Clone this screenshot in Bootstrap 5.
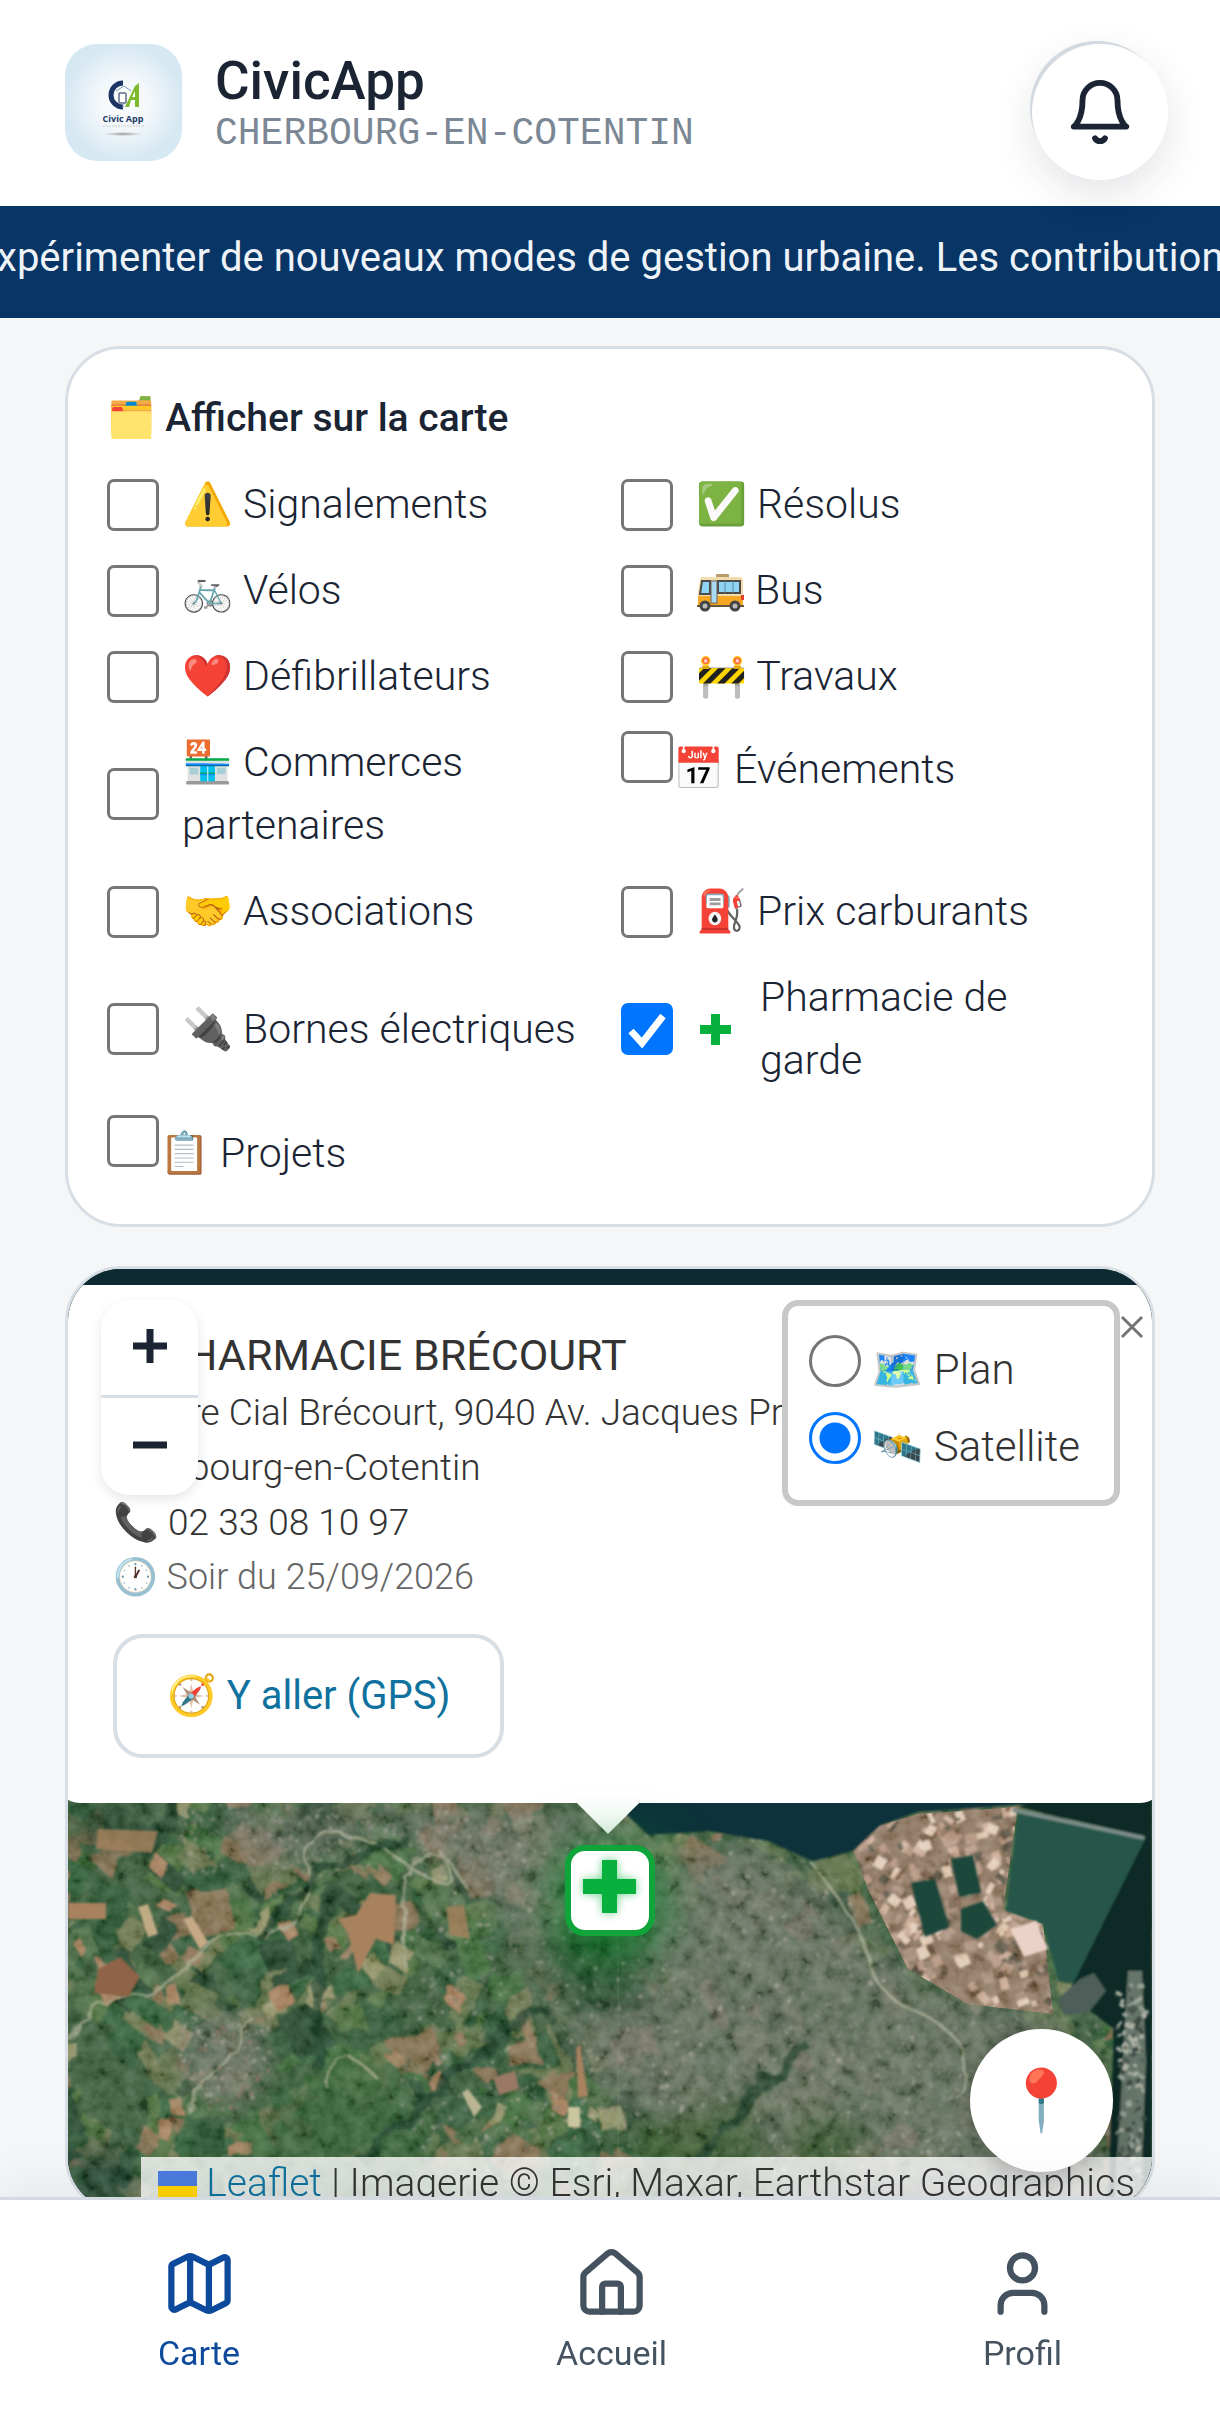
<!DOCTYPE html>
<html lang="fr">
<head>
<meta charset="utf-8">
<meta name="viewport" content="width=device-width, initial-scale=1">
<title>CivicApp – Carte</title>
<link href="https://cdn.jsdelivr.net/npm/bootstrap@5.3.0/dist/css/bootstrap.min.css" rel="stylesheet">
<style>
:root{--ink:#1a2433;--edge:#d8dee5;--green:#08b03d}
body{font-family:Roboto,"Noto Color Emoji",sans-serif;font-weight:300;font-size:41px;line-height:63px;color:var(--ink);background:#f4f6f8}
.topbar{padding:44px 52px 26px 65px;height:206px}
.brand{gap:33px}
.brand-logo{width:117px;height:117px;border-radius:32px}
.brand-title{font-size:53px;line-height:58px;font-weight:500;margin:8px 0 0}
.brand-sub{font-family:"Liberation Mono",monospace;font-weight:400;font-size:38px;line-height:48px;color:#7b8794}
.bell-btn{width:136px;height:136px;border:0;background:#fff;box-shadow:-3px -4px 0 -1px #d3d9e1,0 14px 40px rgba(26,36,51,.12)}
.ticker{height:112px;background:#063566;color:#eef3f8;font-weight:400;font-size:40px;line-height:104px;white-space:nowrap}
.page-body{padding:28px 65px 0}
.panel{background:#fff;border:3px solid var(--edge);border-radius:56px}
.filters{padding:38px 39px 39px;margin-bottom:39px}
.filters h2{font-size:39px;line-height:63px;font-weight:500;margin:0 0 23px}
.filter-grid{display:grid;grid-template-columns:1fr 1fr;gap:23px 22px}
.filter-grid label{display:flex;align-items:center;gap:23px}
.filter-grid label.plain{display:block}
.tick{appearance:none;flex:none;width:52px;height:52px;margin:0;border:3px solid #767676;border-radius:7px;background:#fff}
.tick.dot{border-radius:50%}
.plain .tick{vertical-align:baseline}
.layers .tick{vertical-align:-3px}
.tick:checked{border-color:#0075ff;background:#0075ff url("data:image/svg+xml,%3Csvg xmlns='http://www.w3.org/2000/svg' viewBox='0 0 46 46'%3E%3Cpath d='M7 25l11 12L39 10' fill='none' stroke='white' stroke-width='7'/%3E%3C/svg%3E") center/100%}
.tick.dot:checked{background:radial-gradient(circle,#0075ff 15px,#fff 16px)}
.plus-ico{width:31px;height:31px;margin:0 6px 0 4px;flex:none}
.bus-ico{width:49px;height:40px;vertical-align:-8px}
.map{height:947px;background:#102830}
.map-art{inset:0;width:100%;height:100%}
.popup{top:16px;left:-12px;right:-12px;height:518px;background:#fff;border-radius:24px;padding:40px 57px;color:#333;font-size:37px;line-height:55px}
.popup::after{content:"";position:absolute;left:50%;bottom:-22px;width:44px;height:44px;margin-left:-24px;background:#fff;transform:rotate(45deg)}
.popup h3{font-size:43px;line-height:60px;font-weight:400;margin:0}
.popup .when{color:#666;font-size:36px}
.gps{display:inline-block;margin-top:29px;padding:29px 50px;border:4px solid var(--edge);border-radius:30px;font-size:40px;line-height:58px;font-weight:400;color:#0f719e;text-decoration:none}
.zoomer{top:31px;left:33px;width:97px;border-radius:28px;background:#fff;box-shadow:0 4px 12px rgba(0,0,0,.1)}
.zoomer button{height:95px;border:0;background:none}
.zoomer button+button{height:100px;border-top:3px solid var(--edge)}
.zoomer svg{display:block;margin:-4px auto 0}
.layers{top:31px;right:32px;border:6px solid #c8c8c8;border-radius:16px;background:#fff;color:#333;font-size:42px;line-height:77px;padding:25px 34px 15px 21px}
.close-x{top:46px;right:8px;width:24px;height:24px;border:0;background:none;padding:0}
.pin-box{left:50%;top:576px;width:90px;height:91px;margin-left:-45px;border:6px solid #10a53b;border-radius:20px;background:#fff;box-shadow:0 8px 50px 8px rgba(0,140,40,.65)}
.locate{right:39px;top:760px;width:143px;height:143px;border:0;background:#fff;font-size:60px;box-shadow:0 6px 24px rgba(0,0,0,.25)}
.credit{right:0;bottom:0;padding:0 17px;background:rgba(255,255,255,.8);color:#333;font-size:39px;line-height:53px;white-space:nowrap}
.credit a{color:#0f719e;text-decoration:none}
.credit svg{width:39px;height:30px}
.tabs{height:221px;background:#fff;border-top:3px solid #d5dae2;box-shadow:0 -10px 50px rgba(26,36,51,.07);padding-top:46px}
.tabs a{color:#45525f;font-weight:400;font-size:34px;line-height:40px;text-decoration:none}
.tabs a.active{color:#0d4a9c}
.tabs svg{width:75px;height:75px;margin-bottom:12px}
</style>
</head>
<body>
<header class="topbar bg-white d-flex justify-content-between align-items-start">
  <div class="brand d-flex">
    <svg class="brand-logo" viewBox="0 0 117 117" role="img" aria-label="Civic App">
      <defs><radialGradient id="lg"><stop offset="0" stop-color="#fdfefe"/><stop offset=".5" stop-color="#f1f6fa"/><stop offset="1" stop-color="#d6e8f2"/></radialGradient>
      <radialGradient id="sh"><stop offset="0" stop-color="#999"/><stop offset="1" stop-color="#999" stop-opacity="0"/></radialGradient></defs>
      <rect width="117" height="117" fill="url(#lg)"/>
      <path d="M58 39a12 12 0 1 0 0 24" fill="none" stroke="#1d3564" stroke-width="5"/>
      <path d="M60 63L70 42l4-3v24h-4v-7h-4l-2 7z" fill="#7cb92c"/><path d="M70 47v6h-3z" fill="#fff"/>
      <rect x="54" y="49" width="7" height="10" rx="1" fill="#fff" stroke="#5d6c86" stroke-width="1.5"/><path d="M51 47l8-5 7 5M58 59v5" stroke="#7d9ab0" fill="none"/>
      <text x="58" y="78" text-anchor="middle" font-family="Open Sans,sans-serif" font-weight="700" font-size="9" fill="#253c63">Civic App</text>
      <path d="M38 82h42" stroke="#c6ccd2" stroke-dasharray="2 1"/><ellipse cx="58" cy="90" rx="19" ry="2" fill="url(#sh)"/>
    </svg>
    <div>
      <h1 class="brand-title">CivicApp</h1>
      <div class="brand-sub">CHERBOURG-EN-COTENTIN</div>
    </div>
  </div>
  <button class="bell-btn rounded-circle d-flex align-items-center justify-content-center p-0" aria-label="Notifications">
    <svg width="70" height="70" viewBox="0 0 24 24" fill="none" stroke="#1a2433" stroke-width="2" stroke-linecap="round" stroke-linejoin="round"><path d="M6 8a6 6 0 0 1 12 0c0 7 3 9 3 9H3s3-2 3-9"/><path d="M10.300 21a1.940 1.940 0 0 0 3.400 0"/></svg>
  </button>
</header>
<div class="ticker d-flex justify-content-center overflow-hidden"><span>expérimenter de nouveaux modes de gestion urbaine. Les contributions</span></div>

<main class="page-body">
  <section class="panel filters">
    <h2>🗂️ Afficher sur la carte</h2>
    <div class="filter-grid">
      <label><input class="tick" type="checkbox"><span>⚠️ Signalements</span></label>
      <label><input class="tick" type="checkbox"><span>✅ Résolus</span></label>
      <label><input class="tick" type="checkbox"><span>🚲 Vélos</span></label>
      <label><input class="tick" type="checkbox"><span><svg class="bus-ico" viewBox="0 0 49 40" aria-hidden="true"><rect x="20" y="2" width="13" height="4" rx="1" fill="#b99a6b"/><path d="M6 5h38q3 0 3 4v24H2V20L4 8q0-3 2-3z" fill="#f3dcae"/><path d="M2 24h45v10H2z" fill="#f5a623"/><path d="M4 22L6 9h8v13zM22 9h22v12H22z" fill="#8fd3f5" stroke="#4b4a48" stroke-width="2"/><path d="M29 9v12M37 9v12" stroke="#5d8aa0"/><rect x="15" y="9" width="6" height="22" fill="#a9dcf3" stroke="#6c6254"/><rect x="45" y="23" width="3" height="5" fill="#e0402f"/><path d="M1 33h47v2H1z" fill="#6a5540"/><g fill="#bbb" stroke="#444" stroke-width="3"><circle cx="9" cy="34" r="4"/><circle cx="39" cy="34" r="4"/></g></svg> Bus</span></label>
      <label><input class="tick" type="checkbox"><span>❤️ Défibrillateurs</span></label>
      <label><input class="tick" type="checkbox"><span>🚧 Travaux</span></label>
      <label><input class="tick" type="checkbox"><span>🏪 Commerces partenaires</span></label>
      <label class="plain"><input class="tick" type="checkbox">📅 Événements</label>
      <label><input class="tick" type="checkbox"><span>🤝 Associations</span></label>
      <label><input class="tick" type="checkbox"><span>⛽ Prix carburants</span></label>
      <label><input class="tick" type="checkbox"><span>🔌 Bornes électriques</span></label>
      <label><input class="tick" type="checkbox" checked><svg class="plus-ico" viewBox="0 0 31 31"><path d="M11 0h9v11h11v9H20v11h-9V20H0v-9h11z" fill="#08b03d"/></svg><span>Pharmacie de garde</span></label>
      <label class="plain"><input class="tick" type="checkbox">📋 Projets</label>
    </div>
  </section>

  <section class="panel map position-relative overflow-hidden">
    <svg class="map-art position-absolute" viewBox="0 0 1084 941" preserveAspectRatio="xMidYMin slice" aria-hidden="true">
      <defs>
        <filter id="grain" x="0" y="0" width="100%" height="100%"><feTurbulence type="fractalNoise" baseFrequency=".07" numOctaves="3" seed="7"/><feColorMatrix values="1.6 0 0 0 -.35  1.500 0 0 0 -.3  1.500 0 0 0 -.33  0 0 0 0 1"/></filter>
        <filter id="warp"><feTurbulence type="fractalNoise" baseFrequency=".03" numOctaves="3" seed="3"/><feDisplacementMap in="SourceGraphic" scale="18"/><feGaussianBlur stdDeviation="1"/></filter>
        <filter id="soft"><feGaussianBlur stdDeviation="1"/></filter>
        <filter id="blurry"><feGaussianBlur stdDeviation="14"/></filter>
        <clipPath id="port"><path d="M812 556L850 545 950 538 935 640 975 655 985 745 900 735 840 700 800 620 785 580z"/></clipPath>
      </defs>
      <rect width="1084" height="941" fill="#3c5c3d"/>
      <g id="fields" filter="url(#warp)"></g>
      <g filter="url(#blurry)" fill="#6b6f63" opacity=".8"><path d="M140 540H560L600 590 700 575 860 720 1000 750 1040 941H700L540 820 480 740 430 640 330 560 200 600z"/><ellipse cx="155" cy="790" rx="45" ry="50"/></g>
      <g filter="url(#blurry)" opacity=".85"><path d="M470 670L560 620 580 730 500 750z" fill="#234a2c"/><path d="M560 860l120-30 40 110H560z" fill="#35552e"/><path d="M200 820l140-20 40 141H180z" fill="#355f38"/><path d="M725 850h70v60h-70z" fill="#35552e"/><path d="M0 880h70v60H0z" fill="#243f30"/><path d="M225 534h60v20h-60zM0 534h70v40H0z" fill="#22402c"/></g>
      <g id="houses" filter="url(#soft)" opacity=".6"></g>
      <g fill="none" stroke="#a3a68c" stroke-width="3" opacity=".75" filter="url(#warp)"><path d="M0 770Q20 730 60 725T120 690 190 665 240 600 330 590 370 580"/><path d="M340 700Q325 610 350 590T400 620"/><path d="M740 590Q790 650 800 690T860 750 890 830"/><path d="M120 840Q160 790 185 750M260 820Q260 760 310 810"/></g>
      <g fill="none" stroke="#1e3c29" stroke-width="10" opacity=".75" filter="url(#warp)"><path d="M190 670L250 600 340 575"/><path d="M262 630L250 700 250 800"/><path d="M630 890L700 810 740 775M290 890L370 820 440 760 480 740"/></g>
      <g><path d="M812 556L850 545 950 538 935 640 975 655 985 745 900 735 840 700 800 620 785 580z" fill="#8c7562"/><g id="sheds" clip-path="url(#port)" filter="url(#soft)"></g></g>
      <rect width="1084" height="941" filter="url(#grain)" style="mix-blend-mode:soft-light" opacity=".5"/>
      <g filter="url(#soft)">
        <path d="M-10-10H1094V60H-10z" fill="#102a33"/>
        <path d="M550 500L558 545 580 566 640 562 700 572 745 592 785 582 812 556 850 543 950 536 1084 540V500z" fill="#0f303b"/>
        <path d="M950 541L1078 568 1006 715 990 712 975 655 938 642z" fill="#285648"/>
        <path d="M1084 520V941H1040L1046 760 1000 725 1078 568 950 538 1084 500z" fill="#0c2c26"/>
        <path d="M945 541L1076 569" stroke="#7d8d8a" stroke-width="4"/>
        <path d="M883 590l22-4 8 38-22 4zM843 614l24-4 14 48-24 10zM893 640l22-8 14 24-20 14-16-8z" fill="#1e463a"/>
        <path d="M942 660l26-8 12 28-24 8z" fill="#ead2c8"/>
        <path d="M990 730l22-20 14-6 12 18-18 22-24 2z" fill="#4d5f58"/>
        <path d="M1060 702h14l4 90-6 149h-26l8-130z" fill="#66746b"/>
      </g>
      <g id="quay" filter="url(#soft)"></g>
      <path d="M550 534v407" stroke="#9aa88c" opacity=".2"/>
      <g filter="url(#soft)" fill="#a8825f"><path d="M30 560l60 2-6 22-56-4z" opacity=".8"/><path d="M0 634h38v16H0z"/><path d="M70 638l10-3 10 30-10 3z" fill="#c0ab84"/><path d="M115 650l9-3 16 26-8 8z" fill="#c6a985"/><path d="M270 650l18-4 14-22 26 2-2 50-18-6-18 34-10-40z"/><path d="M378 638l18-2 6 34-20-4z" opacity=".8"/><path d="M508 780l4-5 8 52-10 2z"/><path d="M500 838h12v20h-12z" fill="#c9c6a0"/><path d="M394 824l6-4 14 18-8 10z" fill="#bcb594"/><path d="M30 700l22-12 20 20-12 20-34-4z" fill="#8f6446"/><path d="M425 808l22-6 4 18-20 6z" fill="#9a7866"/></g>
    </svg>

    <div class="popup position-absolute">
      <h3>✚ PHARMACIE BRÉCOURT</h3>
      <div>Centre Cial Brécourt, 9040 Av. Jacques Prévert,</div>
      <div>Cherbourg-en-Cotentin</div>
      <div>📞 02 33 08 10 97</div>
      <div class="when">🕐 Soir du 25/09/2026</div>
      <a class="gps" href="#gps">🧭 Y aller (GPS)</a>
    </div>
    <button class="close-x position-absolute d-flex" aria-label="Fermer"><svg width="24" height="24" viewBox="0 0 24 24"><path d="M2 2l20 20M22 2L2 22" stroke="#757575" stroke-width="3"/></svg></button>
    <div class="zoomer position-absolute d-flex flex-column">
      <button aria-label="Zoomer"><svg width="34" height="34" viewBox="0 0 34 34"><path d="M17 0v34M0 17h34" stroke="#1a2433" stroke-width="7"/></svg></button>
      <button aria-label="Dézoomer"><svg width="34" height="34" viewBox="0 0 34 34"><path d="M0 17h34" stroke="#1a2433" stroke-width="7"/></svg></button>
    </div>
    <div class="layers position-absolute">
      <label class="d-block"><input class="tick dot" type="radio" name="fond"> 🗺️ Plan</label>
      <label class="d-block"><input class="tick dot" type="radio" name="fond" checked> 🛰️ Satellite</label>
    </div>
    <div class="pin-box position-absolute d-flex justify-content-center">
      <svg width="78" height="78" viewBox="0 0 78 78"><defs><filter id="glow" x="-50%" y="-50%" width="200%" height="200%"><feGaussianBlur stdDeviation="5"/></filter></defs><path d="M31 9h15v19h19v15H46v19H31V43H12V28h19z" fill="#08b03d" filter="url(#glow)" opacity=".6"/><path d="M31 9h15v19h19v15H46v19H31V43H12V28h19z" fill="#08b03d"/></svg>
    </div>
    <div class="credit position-absolute"><a href="#leaflet"><svg viewBox="0 0 39 30"><path d="M0 0h39v15H0z" fill="#4c7be1"/><path d="M0 15h39v11H0z" fill="#ffd500"/><path d="M0 26h39v4H0z" fill="#e0bc00"/></svg> Leaflet</a> | Imagerie © Esri, Maxar, Earthstar Geographics</div>
    <button class="locate position-absolute rounded-circle p-0" aria-label="Me localiser">📍</button>
  </section>
</main>

<nav class="tabs fixed-bottom d-flex justify-content-around align-items-start">
  <a class="active d-flex flex-column align-items-center" href="#carte"><svg viewBox="0 0 24 24" fill="none" stroke="currentColor" stroke-width="2" stroke-linecap="round" stroke-linejoin="round"><path d="M14.106 5.553a2 2 0 0 0 1.788 0l3.659-1.830A1 1 0 0 1 21 4.619v12.764a1 1 0 0 1-.553.894l-4.553 2.277a2 2 0 0 1-1.788 0l-4.212-2.106a2 2 0 0 0-1.788 0l-3.659 1.830A1 1 0 0 1 3 19.381V6.618a1 1 0 0 1 .553-.894l4.553-2.277a2 2 0 0 1 1.788 0zM15 5.764v15M9 3.236v15"/></svg>Carte</a>
  <a class="d-flex flex-column align-items-center" href="#accueil"><svg viewBox="0 0 24 24" fill="none" stroke="currentColor" stroke-width="2" stroke-linecap="round" stroke-linejoin="round"><path d="M15 21v-8a1 1 0 0 0-1-1h-4a1 1 0 0 0-1 1v8"/><path d="M3 10a2 2 0 0 1 .709-1.528l7-6a2 2 0 0 1 2.582 0l7 6A2 2 0 0 1 21 10v9a2 2 0 0 1-2 2H5a2 2 0 0 1-2-2z"/></svg>Accueil</a>
  <a class="d-flex flex-column align-items-center" href="#profil"><svg viewBox="0 0 24 24" fill="none" stroke="currentColor" stroke-width="2" stroke-linecap="round" stroke-linejoin="round"><path d="M19 21v-2a4 4 0 0 0-4-4H9a4 4 0 0 0-4 4v2"/><circle cx="12" cy="7" r="4"/></svg>Profil</a>
</nav>
<script>
// Seeded scatter of field parcels, houses and dock sheds for the aerial view.
let seed = 11;
const rnd = () => (seed = (seed * 16807) % 2147483647) / 2147483647;
const pick = a => a[Math.floor(rnd() * a.length)];
function scatter(id, n, box, size, colors, keep) {
  const g = document.getElementById(id);
  for (let i = 0; i < n; i++) {
    const x = box[0] + rnd() * box[2], y = box[1] + rnd() * box[3];
    if (keep && !keep(x, y)) continue;
    const r = document.createElementNS("http://www.w3.org/2000/svg", "rect");
    const w = size[0] + rnd() * size[1], h = size[0] + rnd() * size[1];
    for (const [k, v] of Object.entries({x, y, width: w, height: h, fill: pick(colors), transform: `rotate(${pick([-30, -20, 25, 35]) + rnd() * 10} ${x} ${y})`})) r.setAttribute(k, v);
    g.append(r);
  }
}
scatter("fields", 900, [-20, 510, 1100, 430], [12, 36], ["#2f5535", "#3f6a3d", "#4d6e41", "#5d7048", "#2a4a31", "#345a3a", "#6b7550", "#7f6c50", "#496b45", "#35603c"]);
scatter("fields", 60, [-20, 520, 560, 400], [8, 16], ["#a07c5c", "#8c7458", "#8f9068"]);
scatter("houses", 2600, [330, 530, 720, 400], [1, 4], ["#94938a", "#7c7f76", "#56624f", "#aaa497", "#4a5b4a", "#6e7a66"], (x, y) => x + y > 1000 && y > 560 - x / 30 && x - y < 170 + (y > 740 ? 200 : 0));
scatter("houses", 500, [110, 535, 330, 70], [1, 4], ["#98948a", "#7c7f72", "#56624f"]);
scatter("houses", 220, [110, 740, 90, 100], [1, 4], ["#a8a498", "#7c7f72", "#8e6f5e"]);
scatter("sheds", 420, [780, 535, 210, 210], [4, 9], ["#c9a994", "#b39380", "#e0c9b6", "#7a6250", "#5c5446", "#a58a78"]);
scatter("quay", 130, [1048, 710, 26, 220], [2, 5], ["#98a398", "#4f5c54", "#b0b2a4", "#3c4a44"]);
</script>
<script src="https://cdn.jsdelivr.net/npm/bootstrap@5.3.0/dist/js/bootstrap.bundle.min.js"></script>
</body>
</html>
